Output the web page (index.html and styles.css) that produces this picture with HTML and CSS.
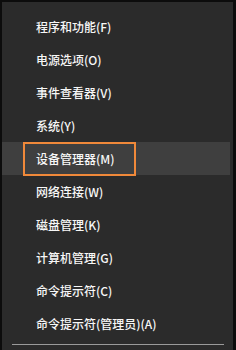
FILE: index.html
```html
<!DOCTYPE html>
<html lang="zh-CN">

<head>
    <meta charset="UTF-8">
    <meta name="viewport" content="width=device-width, initial-scale=1.0">
    <title>WinX Menu</title>
    <link rel="stylesheet" href="styles.css">
</head>

<body>

    <div class="menu">
        <div class="menu-item">程序和功能(F)</div>
        <div class="menu-item">电源选项(O)</div>
        <div class="menu-item">事件查看器(V)</div>
        <div class="menu-item">系统(Y)</div>
        <div class="menu-item active"><span class="mark">设备管理器(M)</span></div>
        <div class="menu-item">网络连接(W)</div>
        <div class="menu-item">磁盘管理(K)</div>
        <div class="menu-item">计算机管理(G)</div>
        <div class="menu-item">命令提示符(C)</div>
        <div class="menu-item">命令提示符(管理员)(A)</div>
        <div class="divider"></div>
    </div>

</body>

</html>
```
FILE: styles.css
```css
body {
    margin: 0;
    background: #000000;
    font-family: "Noto Sans CJK SC", "Noto Sans", sans-serif;
}

.menu {
    box-sizing: border-box;
    width: 236px;
    height: 350px;
    padding-top: 8px;
    background: #2b2b2b;
    border-top: 2px solid #0c0c0c;
    border-left: 2px solid #0c0c0c;
    border-right: 3px solid #0c0c0c;
    color: #f7f7f7;
    font-size: 12px;
    font-weight: 500;
}

.menu-item {
    display: flex;
    align-items: center;
    height: 33px;
    margin-right: 3px;
    padding-left: 34px;
}

.menu-item.active {
    padding-left: 21px;
    background: #3f3f3f;
}

.mark {
    box-sizing: border-box;
    display: flex;
    align-items: center;
    height: 34px;
    padding: 0 19px 0 11px;
    border: 2px solid #f0893a;
}

.divider {
    width: 212px;
    height: 1px;
    margin: 4px 0 0 10px;
    background: #9a9a9a;
}
```
